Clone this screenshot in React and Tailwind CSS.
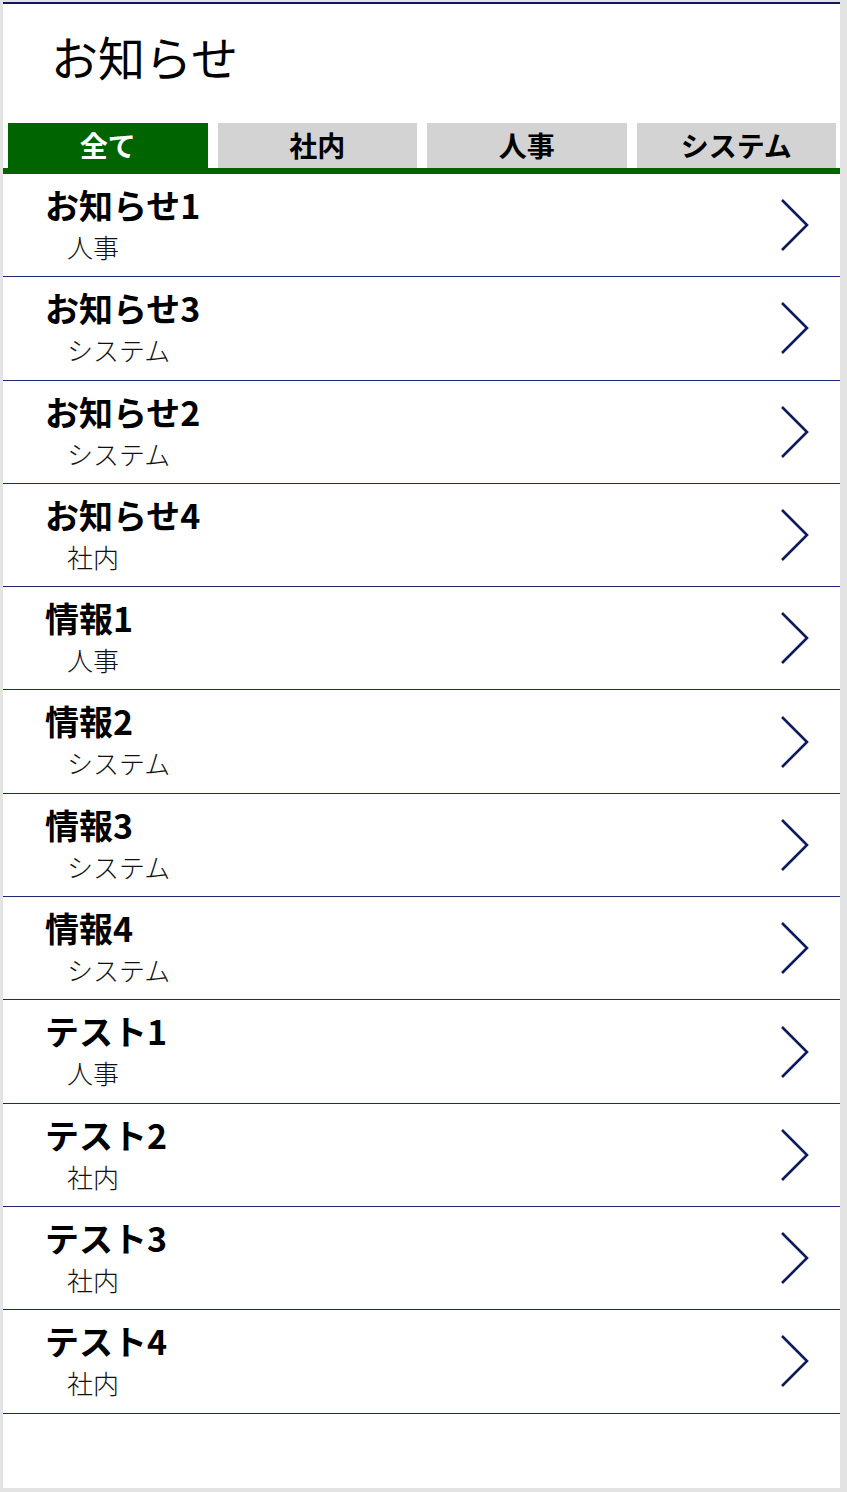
import { useState } from 'react'

const tabs = ['全て', '社内', '人事', 'システム']

const notices = [
  { title: 'お知らせ1', category: '人事' },
  { title: 'お知らせ3', category: 'システム' },
  { title: 'お知らせ2', category: 'システム' },
  { title: 'お知らせ4', category: '社内' },
  { title: '情報1', category: '人事' },
  { title: '情報2', category: 'システム' },
  { title: '情報3', category: 'システム' },
  { title: '情報4', category: 'システム' },
  { title: 'テスト1', category: '人事' },
  { title: 'テスト2', category: '社内' },
  { title: 'テスト3', category: '社内' },
  { title: 'テスト4', category: '社内' },
]

const Chevron = () => (
  <svg width="30" height="54" viewBox="0 0 30 54" fill="none">
    <polyline points="2,2 27,27 2,52" stroke="#0d1a5e" strokeWidth="2.6" strokeLinejoin="miter" />
  </svg>
)

export default function App() {
  const [active, setActive] = useState(0)

  return (
    <div className="min-h-[1492px] bg-[#e3e3e3] pt-[2px] pl-[3px] font-['Noto_Sans_CJK_JP','Noto_Sans',sans-serif] text-black">
      <div className="w-[837px] h-[1486px] bg-white border-t-2 border-[#0d1a5e]">
        {/* Header */}
        <div className="h-[119px] pl-[48px] pt-[22px]">
          <h1 className="text-[47px] leading-[60px] font-normal">お知らせ</h1>
        </div>

        {/* Tabs */}
        <div className="flex gap-[10px] pl-[5px] pr-[4px] border-b-[6px] border-[#006400]">
          {tabs.map((t, i) => (
            <button
              key={t}
              onClick={() => setActive(i)}
              className={
                'flex-1 h-[45px] text-[28px] leading-[45px] font-bold ' +
                (i === active ? 'bg-[#006400] text-white' : 'bg-[#d3d3d3] text-black')
              }
            >
              {t}
            </button>
          ))}
        </div>

        {/* List */}
        <ul>
          {notices.map((n) => (
            <li
              key={n.title}
              className="h-[103.3px] flex items-center justify-between border-b-[1.4px] border-[#1b2a6e] pl-[42px] pr-[30px]"
            >
              <div className="self-start pt-[11px] flex flex-col">
                <span className="text-[34px] leading-[40px] font-bold">{n.title}</span>
                <span className="mt-[6px] ml-[22px] text-[26px] leading-[32px] font-light text-[#111]">{n.category}</span>
              </div>
              <Chevron />
            </li>
          ))}
        </ul>
      </div>
    </div>
  )
}
